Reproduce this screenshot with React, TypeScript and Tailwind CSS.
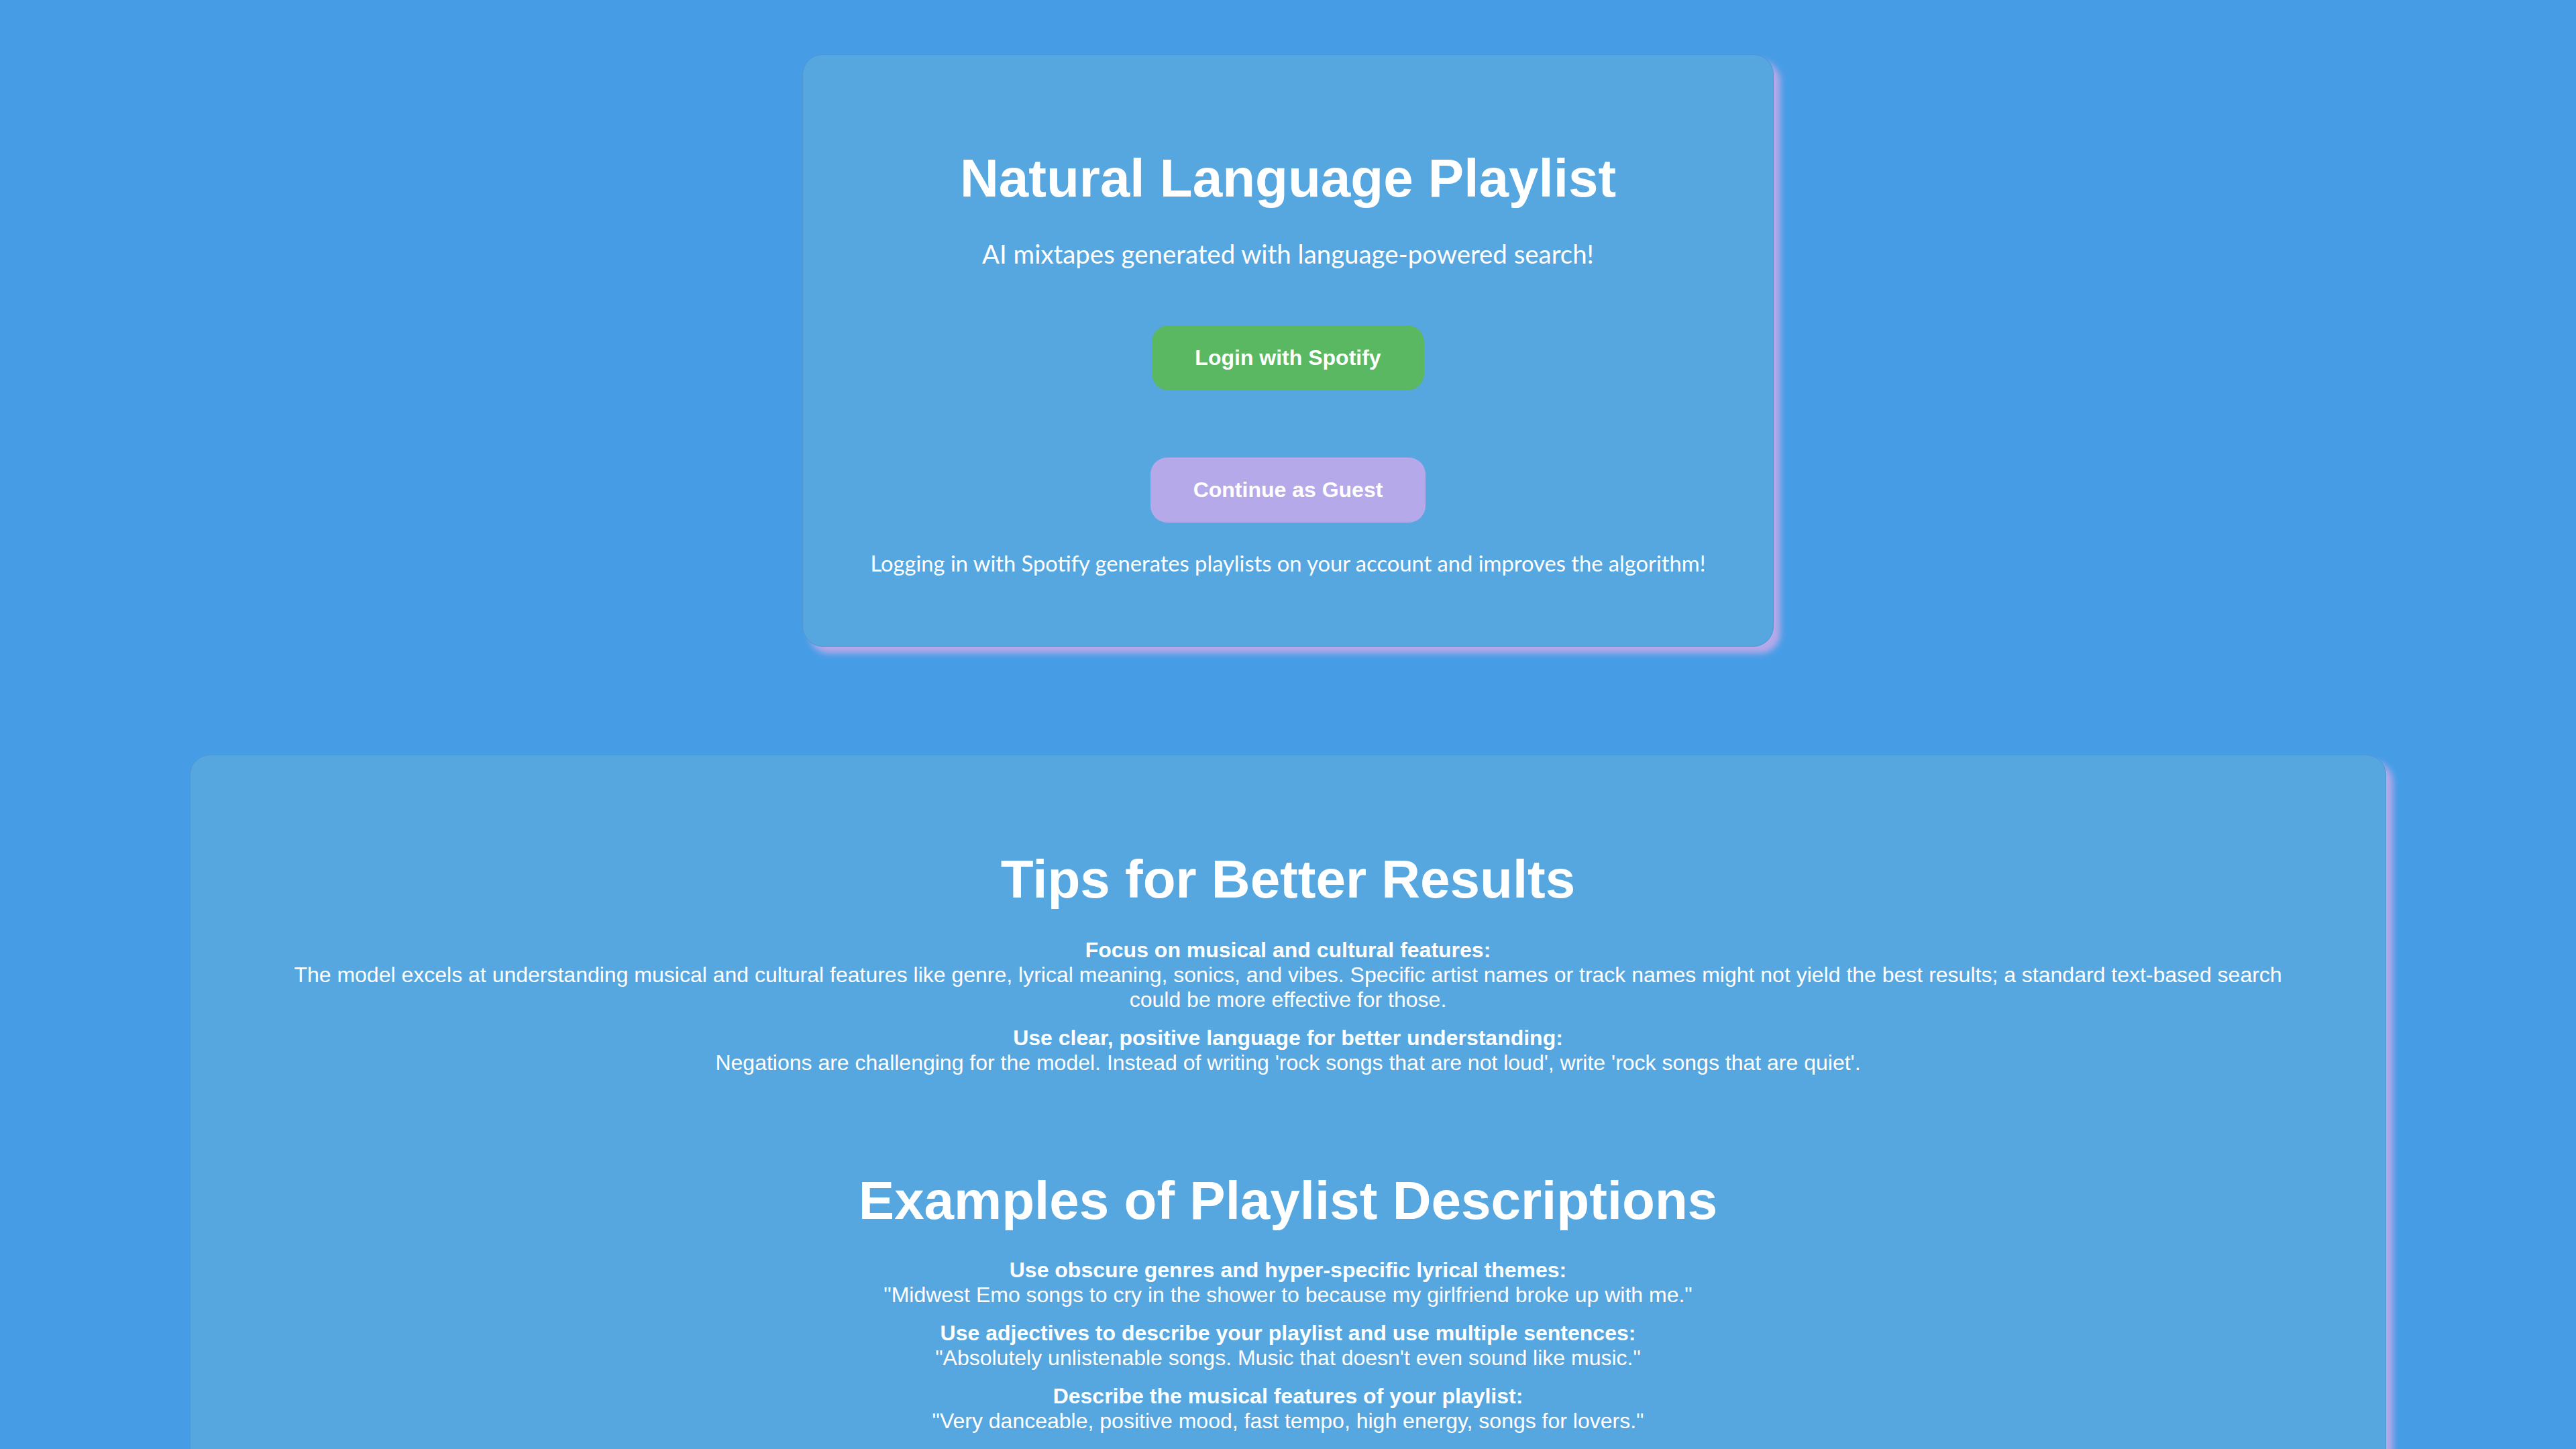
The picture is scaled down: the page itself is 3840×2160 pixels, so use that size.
import React from "react";

const arial = "font-['Liberation_Sans',Arial,sans-serif]";
const avenir = "font-['Lato','Noto_Sans',sans-serif]";

function Tip({ title, body }: { title: string; body: string }) {
  return (
    <div className="text-[32px] leading-[37px] text-white">
      <div className="font-bold">{title}</div>
      <div>{body}</div>
    </div>
  );
}

export default function App() {
  return (
    <div className={`min-h-screen w-full bg-[#469de6] ${arial} flex flex-col items-center pt-[81px] pb-[200px]`}>
      <div className="w-[1448px] rounded-[30px] border border-[#4f96cc] bg-[#56a7e0] shadow-[10px_10px_10px_#b7a9ea] flex flex-col items-center pt-[138px] pb-[104px] text-white">
        <h1 className="text-[80px] leading-[92px] font-bold">Natural Language Playlist</h1>
        <p className={`${avenir} mt-[43px] text-[38.4px] leading-[46px]`}>
          AI mixtapes generated with language-powered search!
        </p>
        <button className="mt-[84px] h-[97px] px-[64px] rounded-[25px] bg-[#5bb862] text-[32px] leading-[37px] font-bold text-white">
          Login with Spotify
        </button>
        <button className="mt-[100px] h-[97px] px-[64px] rounded-[25px] bg-[#b6a9ea] text-[32px] leading-[37px] font-bold text-white">
          Continue as Guest
        </button>
        <p className={`${avenir} mt-[42px] text-[32.7px] leading-[38px]`}>
          Logging in with Spotify generates playlists on your account and improves the algorithm!
        </p>
      </div>

      <div className="mt-[161px] w-[3274px] rounded-[30px] border border-[#4f96cc] bg-[#56a7e0] shadow-[10px_10px_10px_#b7a9ea] px-[135px] pt-[139px] pb-[140px] text-white text-center">
        <h2 className="text-[80px] leading-[92px] font-bold">Tips for Better Results</h2>
        <div className="mt-[41px] flex flex-col gap-[20px]">
          <Tip
            title="Focus on musical and cultural features:"
            body="The model excels at understanding musical and cultural features like genre, lyrical meaning, sonics, and vibes. Specific artist names or track names might not yield the best results; a standard text-based search could be more effective for those."
          />
          <Tip
            title="Use clear, positive language for better understanding:"
            body="Negations are challenging for the model. Instead of writing 'rock songs that are not loud', write 'rock songs that are quiet'."
          />
        </div>
        <h2 className="mt-[141px] text-[80px] leading-[92px] font-bold">Examples of Playlist Descriptions</h2>
        <div className="mt-[39px] flex flex-col gap-[20px]">
          <Tip
            title="Use obscure genres and hyper-specific lyrical themes:"
            body={'"Midwest Emo songs to cry in the shower to because my girlfriend broke up with me."'}
          />
          <Tip
            title="Use adjectives to describe your playlist and use multiple sentences:"
            body={'"Absolutely unlistenable songs. Music that doesn\'t even sound like music."'}
          />
          <Tip
            title="Describe the musical features of your playlist:"
            body={'"Very danceable, positive mood, fast tempo, high energy, songs for lovers."'}
          />
        </div>
      </div>
    </div>
  );
}
